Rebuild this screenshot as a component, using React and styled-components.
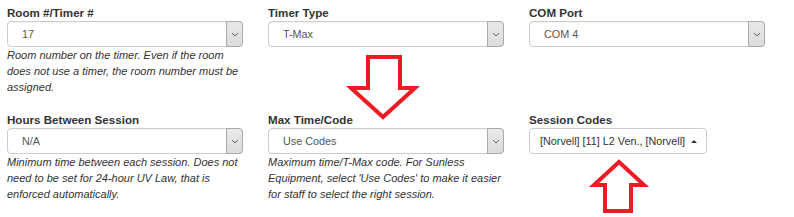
import React from 'react'
import styled, { createGlobalStyle } from 'styled-components'

const GlobalStyle = createGlobalStyle`
    html, body {
        margin: 0;
        padding: 0;
        background: #fff;
    }
    body {
        font-family: 'Liberation Sans', Arial, sans-serif;
        color: #333;
    }
`

const Page = styled.div`
    position: relative;
    width: 794px;
    height: 217px;
    overflow: hidden;
`

const Grid = styled.div`
    display: grid;
    grid-template-columns: repeat(3, 236px);
    column-gap: 25px;
    row-gap: 17px;
    padding: 5px 0 0 7px;
`

const Field = styled.div`
    display: flex;
    flex-direction: column;
    align-items: flex-start;
`

const Label = styled.label`
    font-weight: bold;
    font-size: 11.6px;
    line-height: 16px;
    color: #333;
`

const SelectBox = styled.div`
    display: flex;
    align-items: stretch;
    height: 26px;
    width: 236px;
    box-sizing: border-box;
    border: 1px solid #ccc;
    border-radius: 4px;
    background: #fff;
    box-shadow: inset 0 1px 1px rgba(0, 0, 0, 0.04);
`

const SelectValue = styled.span`
    flex: 1;
    display: flex;
    align-items: center;
    padding-left: 14px;
    font-size: 10.8px;
    color: #555;
    white-space: nowrap;
`

const ArrowButton = styled.span`
    width: 15px;
    margin: -1px -1px -1px 0;
    border: 1px solid #aaa;
    border-radius: 0 4px 4px 0;
    background: linear-gradient(#e9e9e9, #dcdcdc);
    display: flex;
    align-items: center;
    justify-content: center;
`

const MultiButton = styled.div`
    display: flex;
    align-items: center;
    gap: 6px;
    height: 26px;
    box-sizing: border-box;
    padding: 0 9px 0 10px;
    border: 1px solid #ccc;
    border-radius: 4px;
    background: #fff;
`

const MultiValue = styled.span`
    font-size: 10.8px;
    color: #333;
    white-space: nowrap;
`

const Caret = styled.span`
    width: 0;
    height: 0;
    border-left: 3px solid transparent;
    border-right: 3px solid transparent;
    border-bottom: 3px solid #333;
`

const Help = styled.p`
    margin: 0;
    font-style: italic;
    font-size: 11px;
    line-height: 16px;
    color: #333;
`

const Overlay = styled.svg`
    position: absolute;
    left: 0;
    top: 0;
    pointer-events: none;
`

const Chevron = () => (
    <svg width="8" height="5" viewBox="0 0 8 5">
        <path d="M1 1 L4 4 L7 1" fill="none" stroke="#666" strokeWidth="1" />
    </svg>
)

const Select = ({ value }) => (
    <SelectBox>
        <SelectValue>{value}</SelectValue>
        <ArrowButton><Chevron /></ArrowButton>
    </SelectBox>
)

const fields = [
    {
        label: 'Room #/Timer #',
        value: '17',
        help: 'Room number on the timer. Even if the room does not use a timer, the room number must be assigned.'
    },
    { label: 'Timer Type', value: 'T-Max' },
    { label: 'COM Port', value: 'COM 4' },
    {
        label: 'Hours Between Session',
        value: 'N/A',
        help: 'Minimum time between each session. Does not need to be set for 24-hour UV Law, that is enforced automatically.'
    },
    {
        label: 'Max Time/Code',
        value: 'Use Codes',
        help: "Maximum time/T-Max code. For Sunless Equipment, select 'Use Codes' to make it easier for staff to select the right session."
    }
]

const App = () => {
    return (
        <Page>
            <GlobalStyle />
            <Grid>
                {fields.map(f => (
                    <Field key={f.label}>
                        <Label>{f.label}</Label>
                        <Select value={f.value} />
                        {f.help && <Help>{f.help}</Help>}
                    </Field>
                ))}
                <Field>
                    <Label>Session Codes</Label>
                    <MultiButton>
                        <MultiValue>[Norvell] [11] L2 Ven., [Norvell]</MultiValue>
                        <Caret />
                    </MultiButton>
                </Field>
            </Grid>
            <Overlay width="794" height="217" viewBox="0 0 794 217">
                <polygon
                    points="368,57 400,57 400,88 415,88 383,117 351,88 368,88"
                    fill="none"
                    stroke="#ed1c24"
                    strokeWidth="4"
                />
                <polygon
                    points="619,162 644,185 631,185 631,211 605,211 605,185 594,185"
                    fill="none"
                    stroke="#ed1c24"
                    strokeWidth="4"
                />
            </Overlay>
        </Page>
    )
}

export default App
